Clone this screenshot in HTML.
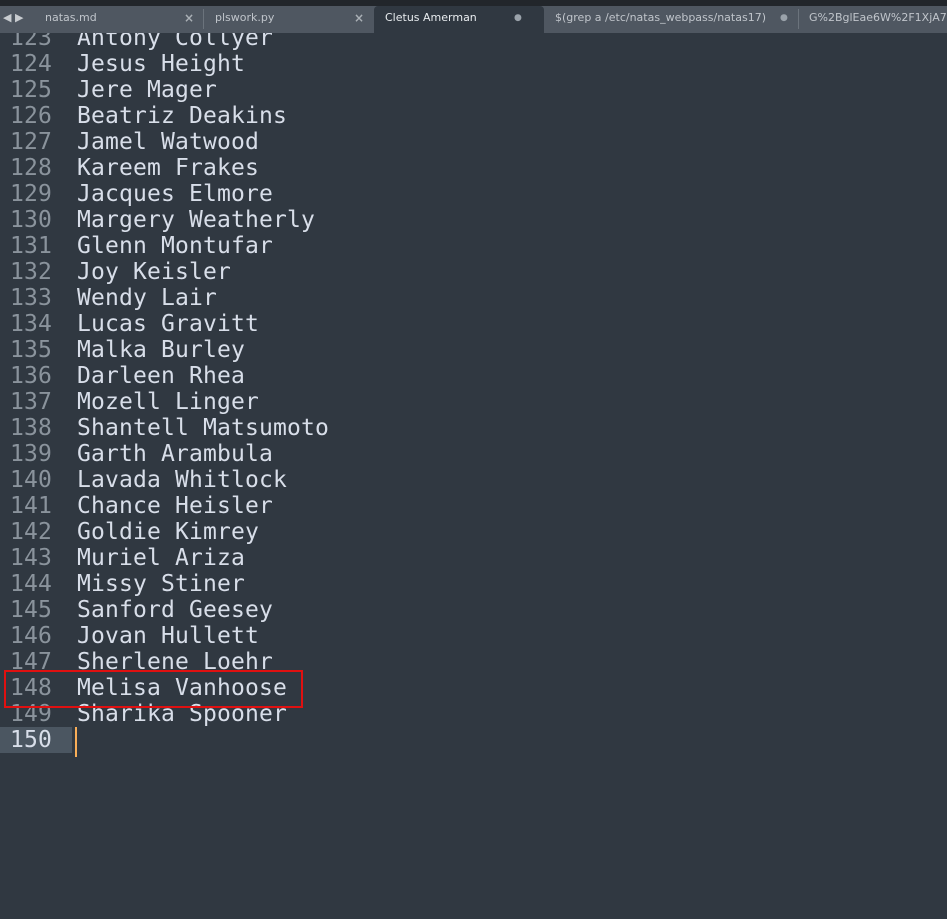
<!DOCTYPE html><html><head><style>
body{margin:0;width:947px;height:919px;background:#303841;overflow:hidden;position:relative;font-family:"DejaVu Sans Mono",monospace}
.ed{position:absolute;left:0;top:25px;width:947px}
.l{height:26px;line-height:26px;font-size:23px;letter-spacing:0.15px;white-space:pre;position:relative}
.n{position:absolute;left:0;width:52px;text-align:right;color:#8a939c}
.t{position:absolute;left:77px;color:#d8dee9}
.cur{background:#4b5661;width:72px;position:absolute;left:0;height:26px}
.top{position:absolute;left:0;top:0;width:947px;height:6px;background:#22262b}
.bar{position:absolute;left:0;top:6px;width:947px;height:27px;background:#4f5761;font-family:"DejaVu Sans",sans-serif;font-size:11px;color:#c0c5cb}
.tab{position:absolute;top:0;height:27px;line-height:24px;white-space:nowrap}
.x{font-size:12px;color:#aab0b6;font-weight:bold}
</style></head><body>
<div class="ed">
<div class="l"><span class="n">123</span><span class="t">Antony Collyer</span></div>
<div class="l"><span class="n">124</span><span class="t">Jesus Height</span></div>
<div class="l"><span class="n">125</span><span class="t">Jere Mager</span></div>
<div class="l"><span class="n">126</span><span class="t">Beatriz Deakins</span></div>
<div class="l"><span class="n">127</span><span class="t">Jamel Watwood</span></div>
<div class="l"><span class="n">128</span><span class="t">Kareem Frakes</span></div>
<div class="l"><span class="n">129</span><span class="t">Jacques Elmore</span></div>
<div class="l"><span class="n">130</span><span class="t">Margery Weatherly</span></div>
<div class="l"><span class="n">131</span><span class="t">Glenn Montufar</span></div>
<div class="l"><span class="n">132</span><span class="t">Joy Keisler</span></div>
<div class="l"><span class="n">133</span><span class="t">Wendy Lair</span></div>
<div class="l"><span class="n">134</span><span class="t">Lucas Gravitt</span></div>
<div class="l"><span class="n">135</span><span class="t">Malka Burley</span></div>
<div class="l"><span class="n">136</span><span class="t">Darleen Rhea</span></div>
<div class="l"><span class="n">137</span><span class="t">Mozell Linger</span></div>
<div class="l"><span class="n">138</span><span class="t">Shantell Matsumoto</span></div>
<div class="l"><span class="n">139</span><span class="t">Garth Arambula</span></div>
<div class="l"><span class="n">140</span><span class="t">Lavada Whitlock</span></div>
<div class="l"><span class="n">141</span><span class="t">Chance Heisler</span></div>
<div class="l"><span class="n">142</span><span class="t">Goldie Kimrey</span></div>
<div class="l"><span class="n">143</span><span class="t">Muriel Ariza</span></div>
<div class="l"><span class="n">144</span><span class="t">Missy Stiner</span></div>
<div class="l"><span class="n">145</span><span class="t">Sanford Geesey</span></div>
<div class="l"><span class="n">146</span><span class="t">Jovan Hullett</span></div>
<div class="l"><span class="n">147</span><span class="t">Sherlene Loehr</span></div>
<div class="l"><span class="n">148</span><span class="t">Melisa Vanhoose</span></div>
<div class="l"><span class="n">149</span><span class="t">Sharika Spooner</span></div>
<div class="l"><span class="cur"></span><span class="n" style="color:#d8dee9">150</span><span style="position:absolute;left:75px;top:0;width:2px;height:30px;background:#f9ae58"></span></div>
</div>
<div style="position:absolute;left:4px;top:670px;width:295px;height:34px;border:2px solid #e01010"></div>
<div class="top"></div>
<div class="bar">
<div class="tab" style="left:3px;font-size:11px;color:#c8ccd0">◀ ▶</div>
<div class="tab" style="left:45px">natas.md</div>
<div class="tab x" style="left:184px">×</div>
<div style="position:absolute;left:203px;top:3px;width:1px;height:20px;background:#6b737c"></div>
<div class="tab" style="left:215px">plswork.py</div>
<div class="tab x" style="left:354px">×</div>
<div class="tab" style="left:374px;width:170px;background:#303841;border-radius:4px 4px 0 0;color:#e8ecef"><span style="position:absolute;left:11px">Cletus Amerman</span><span style="position:absolute;left:140px;color:#9aa2aa;font-size:9px">●</span></div>
<div class="tab" style="left:555px">$(grep a /etc/natas_webpass/natas17)</div>
<div class="tab" style="left:780px;color:#9aa2aa;font-size:9px">●</div>
<div style="position:absolute;left:798px;top:3px;width:1px;height:20px;background:#6b737c"></div>
<div class="tab" style="left:809px">G%2BglEae6W%2F1XjA7</div>
</div>
</body></html>
